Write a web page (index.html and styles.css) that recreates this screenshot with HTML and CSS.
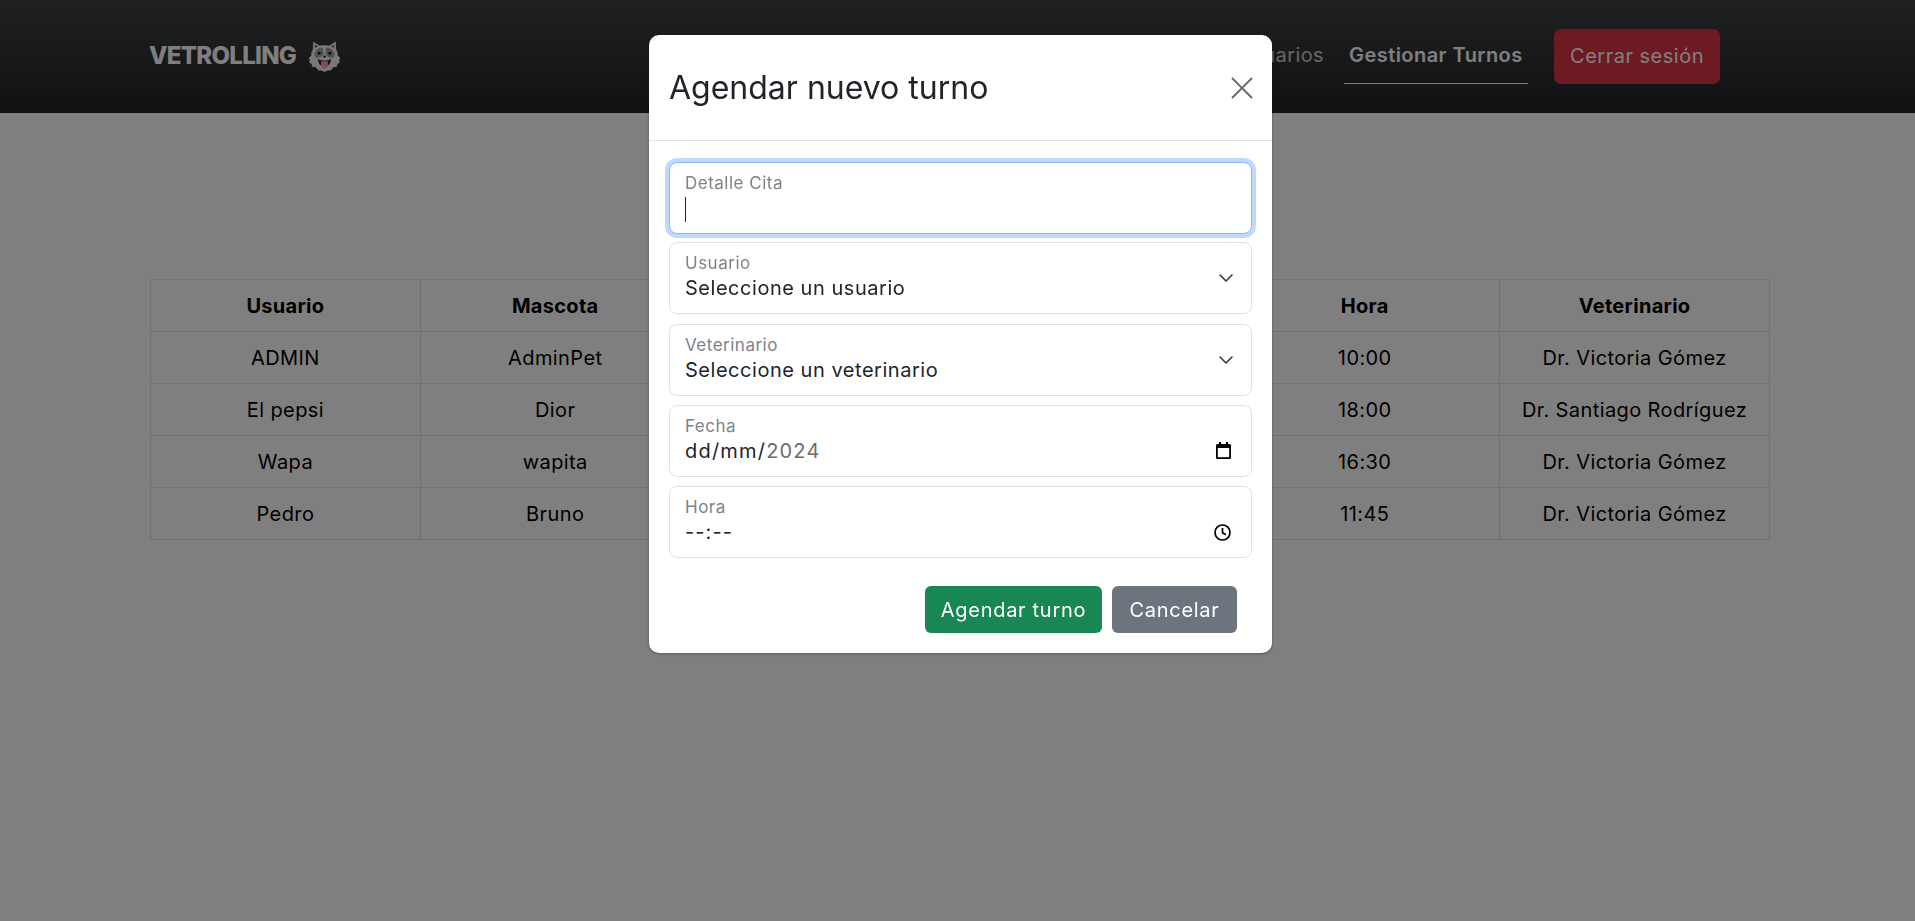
FILE: index.html
```html
<!DOCTYPE html>
<html lang="es">
<head>
    <meta charset="UTF-8">
    <title>Vetrolling - Gestionar Turnos</title>
    <link rel="stylesheet" href="styles.css">
</head>
<body>
<!--barra superior-->
<header class="topbar">
    <a class="brand" href="#">
        <span class="brand-name">VETROLLING</span>
        <svg class="brand-logo" viewBox="0 0 32 32" aria-hidden="true">
            <!--orejas-->
            <path d="M4.500 13 5 2.500 11.500 6.500H20.500L27 2.500 27.500 13Z" fill="#e8e7e4"/>
            <path d="M6.800 10 6.800 5.500 10.500 8ZM25.200 10 25.200 5.500 21.500 8Z" fill="#5c5a58"/>
            <!--cabeza con pelo en los lados-->
            <path d="M5 10Q10 6 16 6T27 10L29 14 28.500 15.500 31.500 19 30 20 31 23 28.500 24 28 27 24.500 27.500 22 30.500 19 30.500 16 32 13 30.500 10 30.500 7.500 27.500 4 27 3.500 24 1 23 2 20 .5 19 3.500 15.500 3 14Z" fill="#f2f1ee"/>
            <!--mascara gris-->
            <path d="M6.500 13Q9 8 14.500 8.500L15 14 12.500 17.500 8 18.500Q5.500 16.500 6.500 13ZM25.500 13Q23 8 17.500 8.500L17 14 19.500 17.500 24 18.500Q26.500 16.500 25.500 13Z" fill="#a3a2a2"/>
            <circle cx="10.800" cy="13.800" r="1.400" fill="#141414"/>
            <circle cx="21.200" cy="13.800" r="1.400" fill="#141414"/>
            <path d="M14 16.200H18L16 18.500Z" fill="#141414"/>
            <!--boca y lengua-->
            <path d="M9.500 19.500Q16 22.500 22.500 19.500 21.500 25 19.500 25.500H12.500Q10.500 25 9.500 19.500Z" fill="#4a2226"/>
            <path d="M12.800 21.500H19.200Q20.200 28.500 16 28.500 11.800 28.500 12.800 21.500Z" fill="#ff9cb0"/>
        </svg>
    </a>
    <nav class="main-nav">
        <a class="nav-link" href="#">Gestionar Usuarios</a>
        <a class="nav-link nav-link-active" href="#">Gestionar Turnos</a>
        <a class="logout-btn" href="#">Cerrar sesión</a>
    </nav>
</header>

<!--tabla de turnos, las columnas centrales quedan debajo del modal-->
<main class="content">
    <table class="turnos">
        <thead>
            <tr><th>Usuario</th><th>Mascota</th><th></th><th></th><th>Hora</th><th>Veterinario</th></tr>
        </thead>
        <tbody>
            <tr><td>ADMIN</td><td>AdminPet</td><td></td><td></td><td>10:00</td><td>Dr. Victoria Gómez</td></tr>
            <tr><td>El pepsi</td><td>Dior</td><td></td><td></td><td>18:00</td><td>Dr. Santiago Rodríguez</td></tr>
            <tr><td>Wapa</td><td>wapita</td><td></td><td></td><td>16:30</td><td>Dr. Victoria Gómez</td></tr>
            <tr><td>Pedro</td><td>Bruno</td><td></td><td></td><td>11:45</td><td>Dr. Victoria Gómez</td></tr>
        </tbody>
    </table>
</main>

<div class="backdrop"></div>

<!--modal para agendar-->
<section class="modal">
    <div class="modal-header">
        <h2 class="modal-title">Agendar nuevo turno</h2>
        <button class="btn-close" type="button" aria-label="Cerrar">
            <svg viewBox="0 0 16 16"><path d="M.6.6a.7.7 0 0 1 1 0L8 7 14.400.6a.7.7 0 0 1 1 1L9 8l6.400 6.400a.7.7 0 0 1-1 1L8 9l-6.400 6.400a.7.7 0 0 1-1-1L7 8 .6 1.600a.7.7 0 0 1 0-1z"/></svg>
        </button>
    </div>
    <form class="modal-body">
        <div class="field field-focus">
            <div class="field-text">
                <span class="field-label">Detalle Cita</span>
                <span class="field-value"><span class="caret"></span></span>
            </div>
        </div>
        <div class="field field-second">
            <div class="field-text">
                <span class="field-label">Usuario</span>
                <span class="field-value">Seleccione un usuario</span>
            </div>
            <svg class="chevron" viewBox="0 0 16 16"><path d="M2 5l6 6 6-6"/></svg>
        </div>
        <div class="field">
            <div class="field-text">
                <span class="field-label">Veterinario</span>
                <span class="field-value">Seleccione un veterinario</span>
            </div>
            <svg class="chevron" viewBox="0 0 16 16"><path d="M2 5l6 6 6-6"/></svg>
        </div>
        <div class="field">
            <div class="field-text">
                <span class="field-label">Fecha</span>
                <span class="field-value field-date">dd/mm/<span class="muted">2024</span></span>
            </div>
            <svg class="calendar" viewBox="0 0 15 17"><path d="M3 0h2v2h5V0h2v2h1.500A1.500 1.500 0 0 1 15 3.500v12a1.500 1.500 0 0 1-1.500 1.500h-12A1.500 1.500 0 0 1 0 15.500v-12A1.500 1.500 0 0 1 1.500 2H3zM1.800 6v9.200h11.400V6z"/></svg>
        </div>
        <div class="field">
            <div class="field-text">
                <span class="field-label">Hora</span>
                <span class="field-value field-time">--:--</span>
            </div>
            <svg class="clock" viewBox="0 0 17 17"><circle cx="8.500" cy="8.500" r="7.500"/><path d="M8.500 4v4.800l3.400 2"/></svg>
        </div>
    </form>
    <div class="modal-footer">
        <button class="btn btn-success" type="button">Agendar turno</button>
        <button class="btn btn-secondary" type="button">Cancelar</button>
    </div>
</section>
</body>
</html>
```

FILE: styles.css
```css
* {
    box-sizing: border-box;
}

html, body {
    margin: 0;
    height: 100%;
}

body {
    background-color: #fff;
    color: #000;
    font-family: Inter, "Noto Sans", sans-serif;
    font-size: 20px;
    overflow: hidden;
}

a {
    text-decoration: none;
    color: inherit;
}

/*barra superior*/
.topbar {
    height: 113px;
    padding: 0 195px 0 149px;
    display: flex;
    align-items: center;
    justify-content: space-between;
    background: linear-gradient(to bottom, #3e4246, #212224);
}

.brand {
    display: flex;
    align-items: center;
    gap: 12px;
    margin-bottom: 3px;
    color: #fff;
}

.brand-name {
    font-size: 24px;
    font-weight: 800;
    letter-spacing: -0.7px;
}

.brand-logo {
    width: 33px;
    height: 33px;
}

.main-nav {
    display: flex;
    align-items: center;
    gap: 15px;
}

.nav-link {
    height: 55px;
    padding: 0 5px;
    line-height: 53px;
    color: #fff;
    font-size: 20px;
    letter-spacing: 0.4px;
    opacity: 0.75;
}

.nav-link-active {
    width: 184px;
    opacity: 1;
    font-weight: 600;
    white-space: nowrap;
    letter-spacing: 0.45px;
    line-height: 52px;
    border-bottom: 1px solid #fff;
}

.logout-btn {
    width: 166px;
    height: 55px;
    line-height: 54px;
    text-align: center;
    margin-left: 11px;
    border-radius: 7px;
    background-color: #dc3545;
    color: #fff;
    letter-spacing: 0.5px;
}

/*tabla*/
.content {
    padding: 166px 145px 0 150px;
}

.turnos {
    width: 100%;
    table-layout: fixed;
    border-collapse: collapse;
    text-align: center;
}

.turnos th, .turnos td {
    height: 52px;
    padding: 0 8px;
    border: 1px solid #dee2e6;
    line-height: 30px;
    letter-spacing: 0.4px;
}

.turnos th {
    font-weight: 700;
    letter-spacing: 0.3px;
}

.turnos td {
    font-weight: 400;
}

/*capa oscura y modal*/
.backdrop {
    position: fixed;
    inset: 0;
    background-color: rgba(0, 0, 0, 0.5);
}

.modal {
    position: fixed;
    left: 649px;
    top: 35px;
    width: 623px;
    height: 618px;
    background-color: #fff;
    border-radius: 10px;
    color: #212529;
    box-shadow: 0 1px 3px rgba(0, 0, 0, 0.3);
}

.modal-header {
    height: 106px;
    padding: 0 19px 0 20px;
    display: flex;
    align-items: center;
    justify-content: space-between;
    border-bottom: 1px solid #dee2e6;
}

.modal-title {
    margin: 0;
    font-size: 32px;
    font-weight: 400;
}

.btn-close {
    width: 22px;
    height: 22px;
    padding: 0;
    border: 0;
    background: none;
}

.btn-close svg {
    display: block;
    width: 100%;
    height: 100%;
    fill: #6a6a6a;
}

.modal-body {
    padding: 21px 20px 0;
    display: flex;
    flex-direction: column;
    gap: 9px;
}

.field {
    height: 72px;
    padding: 0 15px;
    display: flex;
    align-items: center;
    justify-content: space-between;
    border: 1px solid #dee2e6;
    border-radius: 8px;
    background-color: #fff;
}

.field-focus {
    margin-bottom: -1px;
    border-color: #86b7fe;
    box-shadow: 0 0 0 4px #c2d9fd;
}

.field-second {
    margin-bottom: 1px;
}

.field-text {
    display: flex;
    flex-direction: column;
    padding-bottom: 1px;
}

.field-label {
    font-size: 17px;
    line-height: 21px;
    color: #7e8287;
    letter-spacing: 0.5px;
}

.field-value {
    height: 28px;
    font-size: 20px;
    line-height: 28px;
    color: #212529;
    letter-spacing: 0.53px;
}

.field-date {
    letter-spacing: 1.2px;
}

.field-time {
    letter-spacing: 1.1px;
}

.muted {
    color: #6c6c6c;
}

.caret {
    display: inline-block;
    width: 1px;
    height: 25px;
    vertical-align: middle;
    background-color: #212529;
}

.chevron {
    width: 16px;
    height: 16px;
    fill: none;
    stroke: #343a40;
    stroke-width: 1.6;
    stroke-linecap: round;
    stroke-linejoin: round;
    margin-right: 2px;
}

.calendar {
    width: 15px;
    height: 17px;
    fill: #000;
    margin: 18px 5px 0 0;
}

.clock {
    width: 17px;
    height: 17px;
    fill: none;
    stroke: #000;
    stroke-width: 1.700;
    margin: 20px 5px 0 0;
}

.modal-footer {
    padding: 28px 35px 0 0;
    display: flex;
    justify-content: flex-end;
    gap: 10px;
}

.btn {
    height: 47px;
    padding: 0;
    border: 0;
    border-radius: 6px;
    color: #fff;
    font-family: inherit;
    font-size: 20px;
    letter-spacing: 0.7px;
}

.btn-success {
    width: 177px;
    background-color: #198754;
}

.btn-secondary {
    width: 125px;
    background-color: #6c757d;
}
```
